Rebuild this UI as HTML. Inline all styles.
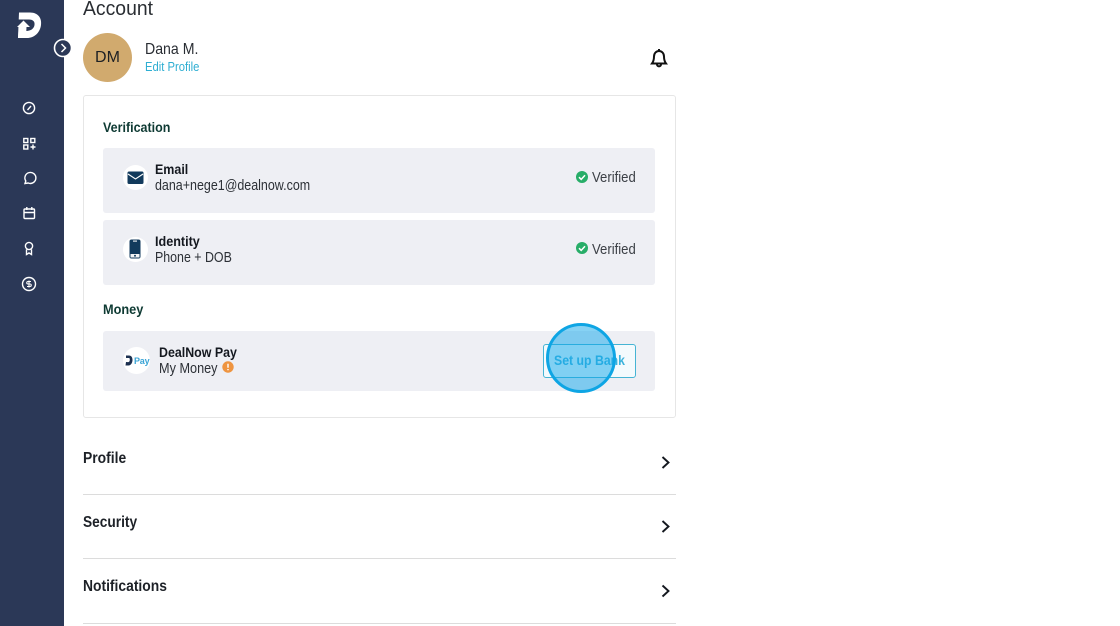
<!DOCTYPE html>
<html><head><meta charset="utf-8"><title>Account</title>
<style>
html,body{margin:0;padding:0;width:1120px;height:626px;overflow:hidden;background:#fff;font-family:"Liberation Sans",sans-serif;color:#20242a}
.a{position:absolute}
.t{position:absolute;white-space:nowrap;line-height:18px;transform-origin:0 50%}
.b{font-weight:bold;color:#14181f}
.g{font-weight:bold;color:#0e3a33;font-size:14px}
.row{position:absolute;left:103px;width:552px;background:#eeeff4;border-radius:3px}
.ic{position:absolute;background:#fff;border-radius:50%}
.line{position:absolute;left:83px;width:593px;height:1px;background:#dcdcdc}
.h{font-weight:bold;font-size:15.5px;color:#1d2127}
</style></head><body>
<div class="a" style="left:0;top:0;width:63.5px;height:626px;background:#2b3857"></div>
<svg class="a" style="left:0;top:0" width="80" height="300" viewBox="0 0 80 300" fill="none">
<path d="M20 12.500H30C38 12.500 42 18 41 25 40 33 34 38 27 38H18L19 12.500Z" fill="#fff"/>
<path d="M16 19.500H29C33 19.500 35 21.500 34.500 25 34 28.500 31 31 26 31V27H16Z" fill="#2b3857"/>
<path d="M23.500 20.500L30 27H26.500L26 38H18L18.800 27H17Z" fill="#fff"/>
<circle cx="63" cy="48" r="8.5" fill="#2b3857" stroke="#fff" stroke-width="1.6"/>
<path d="M61.5 44l4 4-4 4" stroke="#fff" stroke-width="1.5"/>
<g stroke="#fff" stroke-width="1.4">
<circle cx="29" cy="108" r="5.6"/><path d="M27.5 110l3.5-4"/>
<rect x="23.8" y="138.5" width="4" height="4"/><rect x="30.8" y="138.5" width="4" height="4"/><rect x="23.8" y="145" width="4" height="4"/><path d="M30.5 147h5M33 144.5v5"/>
<path d="M25 183.5l.8-2.5a5.5 5.5 0 1 1 2.4 2z"/>
<rect x="24" y="209" width="10.5" height="9.5" rx="1"/><path d="M24 212.5h10.5M26.8 207v3M31.8 207v3"/>
<circle cx="29" cy="246" r="3.6"/><path d="M26.5 249.500v5l2.500-1.500 2.500 1.500v-5"/>
<circle cx="29" cy="284" r="6.500"/>
<path d="M31 281.500h-3a1.200 1.200 0 0 0 0 2.500h2a1.200 1.200 0 0 1 0 2.500h-3M29 280.500v7" stroke-width="1.100"/>
</g></svg>

<div class="t" style="left:83px;top:-3px;font-size:20.500px;line-height:24px;color:#2a2e33;transform:scaleX(.945)">Account</div>
<div class="a" style="left:83px;top:33px;width:49px;height:49px;border-radius:50%;background:#d1aa6e"></div>
<div class="t" style="left:83px;top:49px;width:49px;text-align:center;font-size:16px;color:#1d2024">DM</div>
<div class="t" style="left:145px;top:41px;font-size:16px;color:#292d33;transform:scaleX(.883)">Dana M.</div>
<div class="t" style="left:145px;top:57.500px;font-size:13px;color:#2eaed2;transform:scaleX(.865)">Edit Profile</div>
<svg class="a" style="left:648px;top:46px" width="22" height="24" viewBox="0 0 22 24" fill="none" stroke="#111" stroke-width="2">
<path d="M4 17.500c1.500-2 2-3.500 2-7 0-3 2-5.500 5-5.500s5 2.500 5 5.500c0 3.500.5 5 2 7z"/><path d="M11 5V3M9 18.500c0 2.500 4 2.500 4 0"/></svg>

<div class="a" style="left:83px;top:95px;width:591px;height:321px;border:1px solid #e6e6e6;border-radius:3px"></div>
<div class="t g" style="left:103px;top:118px;transform:scaleX(.893)">Verification</div>

<div class="row" style="top:148px;height:65px"></div>
<div class="ic" style="left:123px;top:165px;width:25px;height:25px"></div>
<svg class="a" style="left:127px;top:171px" width="17" height="14" viewBox="0 0 17 14"><rect width="16" height="12.500" x=".5" y=".5" rx="1.500" fill="#123a5c"/><path d="M1 3l7.500 5L16 3" fill="none" stroke="#fff" stroke-width="1.100"/></svg>
<div class="t b" style="left:155px;top:159.500px;font-size:14px;transform:scaleX(.89)">Email</div>
<div class="t" style="left:155px;top:177px;font-size:14.500px;color:#2c3036;transform:scaleX(.86)">dana+nege1@dealnow.com</div>
<svg class="a" style="left:575px;top:170px" width="14" height="14" viewBox="0 0 14 14"><circle cx="7" cy="7" r="6" fill="#27ad68"/><path d="M4 7.200l2.200 2.200L10 5.300" fill="none" stroke="#fff" stroke-width="1.500"/></svg>
<div class="t" style="left:591.500px;top:169px;font-size:14.500px;color:#3c4046;transform:scaleX(.905)">Verified</div>

<div class="row" style="top:220px;height:65px"></div>
<div class="ic" style="left:123px;top:237px;width:25px;height:25px"></div>
<svg class="a" style="left:129px;top:239px" width="12" height="20" viewBox="0 0 12 20"><rect x=".5" y=".5" width="11" height="19" rx="2" fill="#123a5c"/><rect x="1.500" y="15" width="9" height="3.500" fill="#f3f4f6"/><rect x="4" y="1.500" width="4" height="1.200" fill="#dfe3e8"/><circle cx="6" cy="16.800" r="1" fill="#123a5c"/></svg>
<div class="t b" style="left:155px;top:231.500px;font-size:14px;transform:scaleX(.9)">Identity</div>
<div class="t" style="left:155px;top:249px;font-size:14.500px;color:#2c3036;transform:scaleX(.855)">Phone + DOB</div>
<svg class="a" style="left:575px;top:241px" width="14" height="14" viewBox="0 0 14 14"><circle cx="7" cy="7" r="6" fill="#27ad68"/><path d="M4 7.200l2.200 2.200L10 5.300" fill="none" stroke="#fff" stroke-width="1.500"/></svg>
<div class="t" style="left:591.500px;top:241px;font-size:14.500px;color:#3c4046;transform:scaleX(.905)">Verified</div>

<div class="t g" style="left:103px;top:300px;transform:scaleX(.91)">Money</div>
<div class="row" style="top:331px;height:60px"></div>
<div class="ic" style="left:123px;top:347px;width:27px;height:27px"></div>
<svg class="a" style="left:125px;top:355px" width="8" height="11" viewBox="0 0 8 11"><path d="M1 .5h3c2.500 0 3.500 2 3.500 4.500S6 10.500 3.500 10.500H.5l.5-3.500 1.800.1c1.500 0 2-1 2-2.500S4.500 3 3 3H1z" fill="#1c3050"/></svg>
<div class="t" style="left:134px;top:352px;font-size:9px;font-weight:bold;color:#3aa4d6;letter-spacing:-.2px">Pay</div>
<div class="t b" style="left:159px;top:343px;font-size:14px;transform:scaleX(.886)">DealNow Pay</div>
<div class="t" style="left:159px;top:360px;font-size:14.500px;color:#2c3036;transform:scaleX(.875)">My Money</div>
<svg class="a" style="left:222px;top:361px" width="12" height="12" viewBox="0 0 12 12"><circle cx="6" cy="6" r="5.700" fill="#ee9440"/><path d="M6 2.800v3.900M6 8v1.300" stroke="#fff" stroke-width="1.400"/></svg>

<div class="a" style="left:543px;top:344px;width:91px;height:32px;border:1px solid #45b4d4;border-radius:3px;background:#f3fafd"></div>
<div class="t" style="left:543px;top:351px;width:93px;text-align:center;font-size:14px;font-weight:bold;color:#3db3dc;transform:scaleX(.877);transform-origin:50% 50%">Set up Bank</div>
<div class="a" style="left:546px;top:323px;width:70px;height:70px;box-sizing:border-box;border-radius:50%;border:3px solid #0ea5e4;background:rgba(14,165,233,.5)"></div>

<div class="t h" style="left:83px;top:450px;transform:scaleX(.896)">Profile</div>
<div class="line" style="top:494px"></div>
<div class="t h" style="left:83px;top:514px;transform:scaleX(.885)">Security</div>
<div class="line" style="top:558px"></div>
<div class="t h" style="left:83px;top:578px;transform:scaleX(.894)">Notifications</div>
<div class="line" style="top:623px"></div>
<svg class="a" style="left:655.500px;top:450px" width="20" height="150" viewBox="0 0 20 150" fill="none" stroke="#14181f" stroke-width="1.900">
<path d="M6.500 7l6 5.500-6 5.500M6.500 71l6 5.500-6 5.500M6.500 135.500l6 5.500-6 5.500"/></svg>
</body></html>
